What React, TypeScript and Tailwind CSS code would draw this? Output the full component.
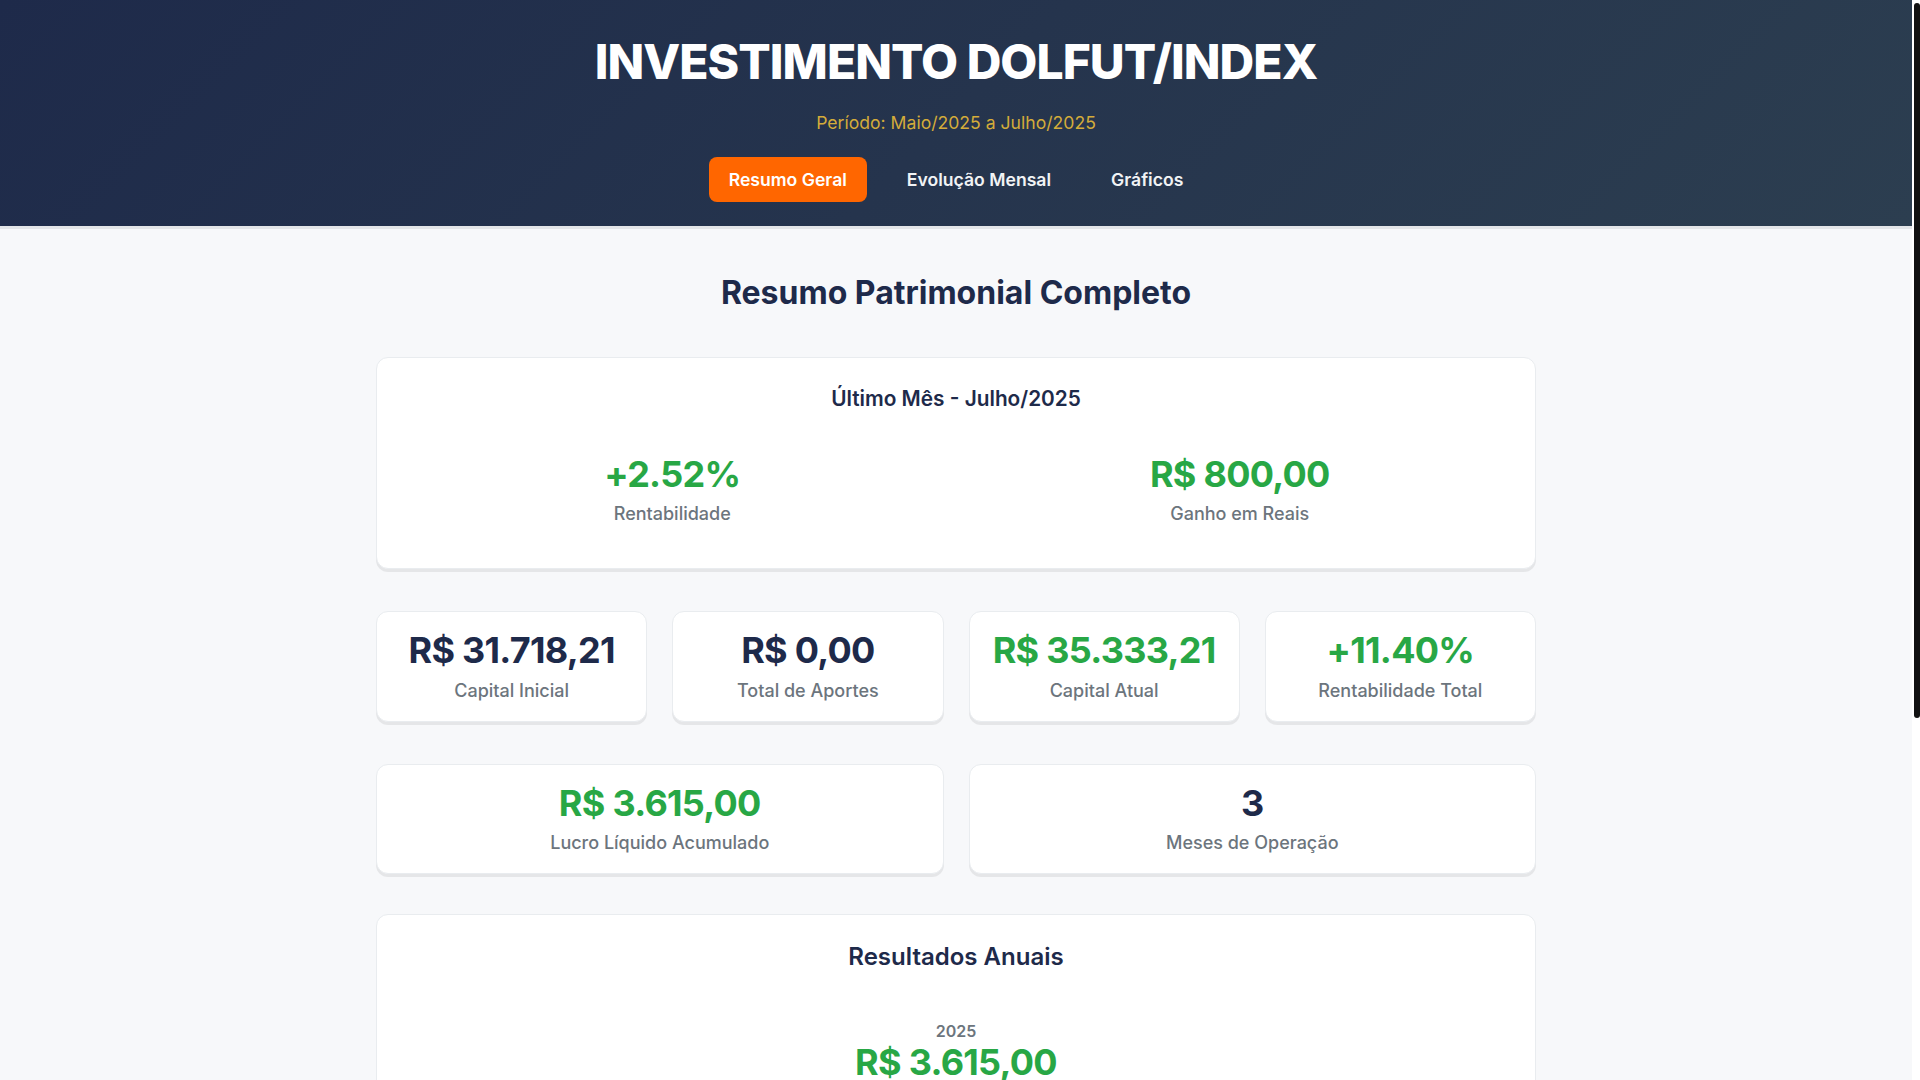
import React from "react"

type Stat = { value: string; label: string; green?: boolean }

const topStats: Stat[] = [
  { value: "R$ 31.718,21", label: "Capital Inicial" },
  { value: "R$ 0,00", label: "Total de Aportes" },
  { value: "R$ 35.333,21", label: "Capital Atual", green: true },
  { value: "+11.40%", label: "Rentabilidade Total", green: true },
]

function StatBox({ stat, boxed = true }: { stat: Stat; boxed?: boolean }) {
  return (
    <div
      className={
        boxed
          ? "rounded-xl border border-[#e9ecef] bg-white px-5 pt-[19px] pb-[17px] text-center shadow-[0_3px_0_rgba(0,0,0,0.07)]"
          : "px-5 pt-[19px] pb-[17px] text-center"
      }
    >
      <div
        className={
          "text-[36px] font-bold leading-[1.1] tracking-[-0.02em] " +
          (stat.green ? "text-[#28a745]" : "text-[#1e2a4a]")
        }
      >
        {stat.value}
      </div>
      <div className="mt-[6px] text-[18px] font-medium leading-[1.5] text-[#6c757d]">{stat.label}</div>
    </div>
  )
}

export default function App() {
  return (
    <div className="flex h-screen bg-white font-['Inter',sans-serif]">
      <div className="flex-1 overflow-hidden bg-[#f7f8fa]">
        <header className="border-b-[3px] border-[#e3e5e8] bg-[linear-gradient(135deg,#1e2a4a_0%,#2c3e50_100%)] px-5 pt-[33px] pb-6 text-center">
          <h1 className="text-[48px] font-extrabold leading-[1.2] tracking-[-0.02em] text-white">
            INVESTIMENTO DOLFUT/INDEX
          </h1>
          <p className="mt-[19px] text-[17.6px] leading-[1.5] text-[#d4ac3a]">Período: Maio/2025 a Julho/2025</p>
          <nav className="mt-[21px] flex justify-center gap-5">
            <button className="rounded-lg bg-[#ff6600] px-5 py-2.5 text-[17.6px] font-semibold leading-[1.45] text-white">
              Resumo Geral
            </button>
            <button className="rounded-lg px-5 py-2.5 text-[17.6px] font-semibold leading-[1.45] text-[#f1f3f5]">
              Evolução Mensal
            </button>
            <button className="rounded-lg px-5 py-2.5 text-[17.6px] font-semibold leading-[1.45] text-[#f1f3f5]">
              Gráficos
            </button>
          </nav>
        </header>

        <main className="mx-auto max-w-[1200px] px-5 pt-10 pb-[120px]">
          <h2 className="mb-10 text-center text-[32px] font-bold leading-[1.5] text-[#1e2a4a]">
            Resumo Patrimonial Completo
          </h2>

          <section className="rounded-xl border border-[#e9ecef] bg-white px-6 pt-[25px] pb-6 shadow-[0_3px_0_rgba(0,0,0,0.07)]">
            <h3 className="mb-[21px] text-center text-[20.8px] font-semibold leading-[1.5] text-[#1e2a4a]">
              Último Mês - Julho/2025
            </h3>
            <div className="grid grid-cols-2 gap-[25px]">
              <StatBox boxed={false} stat={{ value: "+2.52%", label: "Rentabilidade", green: true }} />
              <StatBox boxed={false} stat={{ value: "R$ 800,00", label: "Ganho em Reais", green: true }} />
            </div>
          </section>

          <div className="mt-[42px] grid grid-cols-4 gap-[25px]">
            {topStats.map((s) => (
              <StatBox key={s.label} stat={s} />
            ))}
          </div>

          <div className="mt-[42px] grid grid-cols-2 gap-[25px]">
            <StatBox stat={{ value: "R$ 3.615,00", label: "Lucro Líquido Acumulado", green: true }} />
            <StatBox stat={{ value: "3", label: "Meses de Operação" }} />
          </div>

          <section className="mt-10 rounded-xl border border-[#e9ecef] bg-white p-6 shadow-[0_3px_0_rgba(0,0,0,0.07)]">
            <h3 className="mb-6 text-center text-[24px] font-semibold leading-[1.5] text-[#1e2a4a]">
              Resultados Anuais
            </h3>
            <div className="flex justify-center">
              <div className="px-5 py-5 text-center">
                <div className="text-[16px] font-semibold leading-[1.5] text-[#6c757d]">2025</div>
                <div className="text-[36px] font-bold leading-[1.1] tracking-[-0.02em] text-[#28a745]">R$ 3.615,00</div>
                <div className="mt-1 text-[16px] font-medium leading-[1.5] text-[#6c757d]">+11.40% no ano</div>
              </div>
            </div>
          </section>
        </main>
      </div>

      <div className="w-2 shrink-0 bg-white">
        <div className="mt-[3px] ml-0.5 h-[715px] w-1.5 rounded-full bg-[#111]" />
      </div>
    </div>
  )
}
